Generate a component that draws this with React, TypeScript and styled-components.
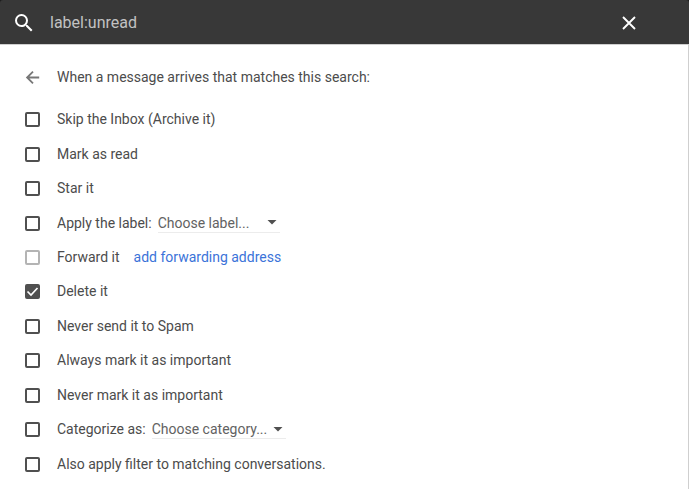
import React, { useState } from "react";
import styled, { createGlobalStyle } from "styled-components";

const GlobalStyle = createGlobalStyle`
  *, *::before, *::after { box-sizing: border-box; }
  body {
    margin: 0;
    background: #1c1c1c;
    color: #4c4c4c;
    font: 14px/20px Roboto, Arial, sans-serif;
  }
  button, input, select { font: inherit; }
`;

const Panel = styled.div`
  display: flex;
  flex-direction: column;
  min-height: 100vh;
`;

const SearchBar = styled.form`
  display: flex;
  align-items: center;
  height: 44px;
  padding: 2px 48px 0 12px;
  background: #383838;
  border-radius: 3px 3px 0 0;
`;

const IconButton = styled.button`
  display: flex;
  flex: none;
  padding: 0;
  border: 0;
  background: none;
  color: inherit;
  cursor: pointer;
`;

const BarButton = styled(IconButton)`
  color: #fff;
`;

const SearchInput = styled.input`
  flex: 1;
  min-width: 0;
  margin-left: 14px;
  padding: 0;
  border: 0;
  outline: 0;
  background: none;
  color: #c2c2c2;
  && {
    font-size: 16px;
  }
`;

const Body = styled.main`
  display: flex;
  flex: 1;
  flex-direction: column;
  padding: 21px 24px 8px;
  background: #fff;
  border-top: 1px solid #cfcfcf;
  border-right: 1px solid #cfcfcf;
`;

const Intro = styled.header`
  display: flex;
  align-items: center;
  gap: 16px;
  height: 22px;
  margin-bottom: 14px;
`;

const BackButton = styled(IconButton)`
  color: #777;
`;

const IntroText = styled.h1`
  margin: 0;
  font-size: 14px;
  font-weight: 400;
`;

const Options = styled.ul`
  display: grid;
  flex: 1;
  grid-auto-rows: minmax(34px, 1fr);
  margin: 0;
  padding: 0;
  list-style: none;
`;

const Option = styled.li`
  display: flex;
  align-items: center;
`;

const OptionLabel = styled.label`
  display: flex;
  align-items: center;
  gap: 16px;
`;

const CheckSlot = styled.span`
  display: grid;
  place-items: center;
  width: 17px;
  height: 17px;
  margin-top: 1px;
  & > * {
    grid-area: 1 / 1;
  }
`;

const Check = styled.input`
  width: 15px;
  height: 15px;
  margin: 0;
  appearance: none;
  border: 2px solid #505050;
  border-radius: 2px;
  background: #fff;
  &:checked {
    background: #505050;
  }
  &:disabled {
    border-color: #b4b4b4;
  }
`;

const Tick = styled.svg`
  z-index: 1;
  pointer-events: none;
`;

const SelectBox = styled.span<{ $wide: boolean }>`
  display: grid;
  align-items: center;
  width: ${(p) => (p.$wide ? 134 : 122)}px;
  height: 20px;
  margin-left: 6px;
  border-bottom: 1px solid #ececec;
  & > * {
    grid-area: 1 / 1;
  }
`;

const Select = styled.select`
  width: 100%;
  padding: 0;
  appearance: none;
  border: 0;
  outline: 0;
  background: none;
  color: #626262;
`;

const Caret = styled.svg`
  justify-self: end;
  margin-right: 3px;
  pointer-events: none;
`;

const Link = styled.a`
  margin-left: 14px;
  color: #3b73d9;
  text-decoration: none;
`;

type Item = {
  id: string;
  text: string;
  disabled?: boolean;
  choice?: { label: string; placeholder: string; wide: boolean };
  link?: string;
};

const items: Item[] = [
  { id: "archive", text: "Skip the Inbox (Archive it)" },
  { id: "read", text: "Mark as read" },
  { id: "star", text: "Star it" },
  {
    id: "label",
    text: "Apply the label:",
    choice: { label: "Label", placeholder: "Choose label...", wide: false },
  },
  { id: "forward", text: "Forward it", disabled: true, link: "add forwarding address" },
  { id: "delete", text: "Delete it" },
  { id: "spam", text: "Never send it to Spam" },
  { id: "important", text: "Always mark it as important" },
  { id: "unimportant", text: "Never mark it as important" },
  {
    id: "category",
    text: "Categorize as:",
    choice: { label: "Category", placeholder: "Choose category...", wide: true },
  },
  { id: "existing", text: "Also apply filter to matching conversations." },
];

export default function App() {
  const [query, setQuery] = useState("label:unread");
  const [checked, setChecked] = useState<Record<string, boolean>>({ delete: true });

  return (
    <>
      <GlobalStyle />
      <Panel>
        <SearchBar role="search" onSubmit={(e) => e.preventDefault()}>
          <BarButton type="submit" aria-label="Search">
            <svg width="24" height="24" viewBox="0 0 24 24" fill="currentColor">
              <path d="M15.5 14h-.79l-.28-.27A6.47 6.47 0 0 0 16 9.5 6.5 6.5 0 1 0 9.5 16c1.61 0 3.09-.59 4.23-1.57l.27.28v.79l5 4.99L20.49 19l-4.99-5zm-6 0a4.5 4.5 0 1 1 0-9 4.5 4.5 0 0 1 0 9z" />
            </svg>
          </BarButton>
          <SearchInput
            aria-label="Search mail"
            value={query}
            onChange={(e) => setQuery(e.target.value)}
          />
          <BarButton type="button" aria-label="Clear search" onClick={() => setQuery("")}>
            <svg width="24" height="24" viewBox="0 0 24 24" fill="none" stroke="currentColor" strokeWidth="1.9">
              <path d="m6 6 12 12M18 6 6 18" />
            </svg>
          </BarButton>
        </SearchBar>
        <Body>
          <Intro>
            <BackButton type="button" aria-label="Back">
              <svg width="17" height="17" viewBox="0 0 17 17" fill="none" stroke="currentColor" strokeWidth="1.8">
                <path d="M15.2 8.5H3.5M9 2.6 3.1 8.5 9 14.4" />
              </svg>
            </BackButton>
            <IntroText>When a message arrives that matches this search:</IntroText>
          </Intro>
          <Options>
            {items.map((item) => (
              <Option key={item.id}>
                <OptionLabel>
                  <CheckSlot>
                    <Check
                      type="checkbox"
                      disabled={item.disabled}
                      checked={!!checked[item.id]}
                      onChange={(e) => setChecked({ ...checked, [item.id]: e.target.checked })}
                    />
                    {checked[item.id] && (
                      <Tick width="15" height="15" viewBox="0 0 15 15" aria-hidden="true">
                        <path d="M2.5 7.5 6 11l6.5-7" fill="none" stroke="#fff" strokeWidth="1.7" />
                      </Tick>
                    )}
                  </CheckSlot>
                  {item.text}
                </OptionLabel>
                {item.choice && (
                  <SelectBox $wide={item.choice.wide}>
                    <Select aria-label={item.choice.label}>
                      <option>{item.choice.placeholder}</option>
                    </Select>
                    <Caret width="10" height="5" viewBox="0 0 10 5" aria-hidden="true">
                      <path d="M0.5 0h9L5 4.5z" fill="#505050" />
                    </Caret>
                  </SelectBox>
                )}
                {item.link && <Link href="#forwarding">{item.link}</Link>}
              </Option>
            ))}
          </Options>
        </Body>
      </Panel>
    </>
  );
}
